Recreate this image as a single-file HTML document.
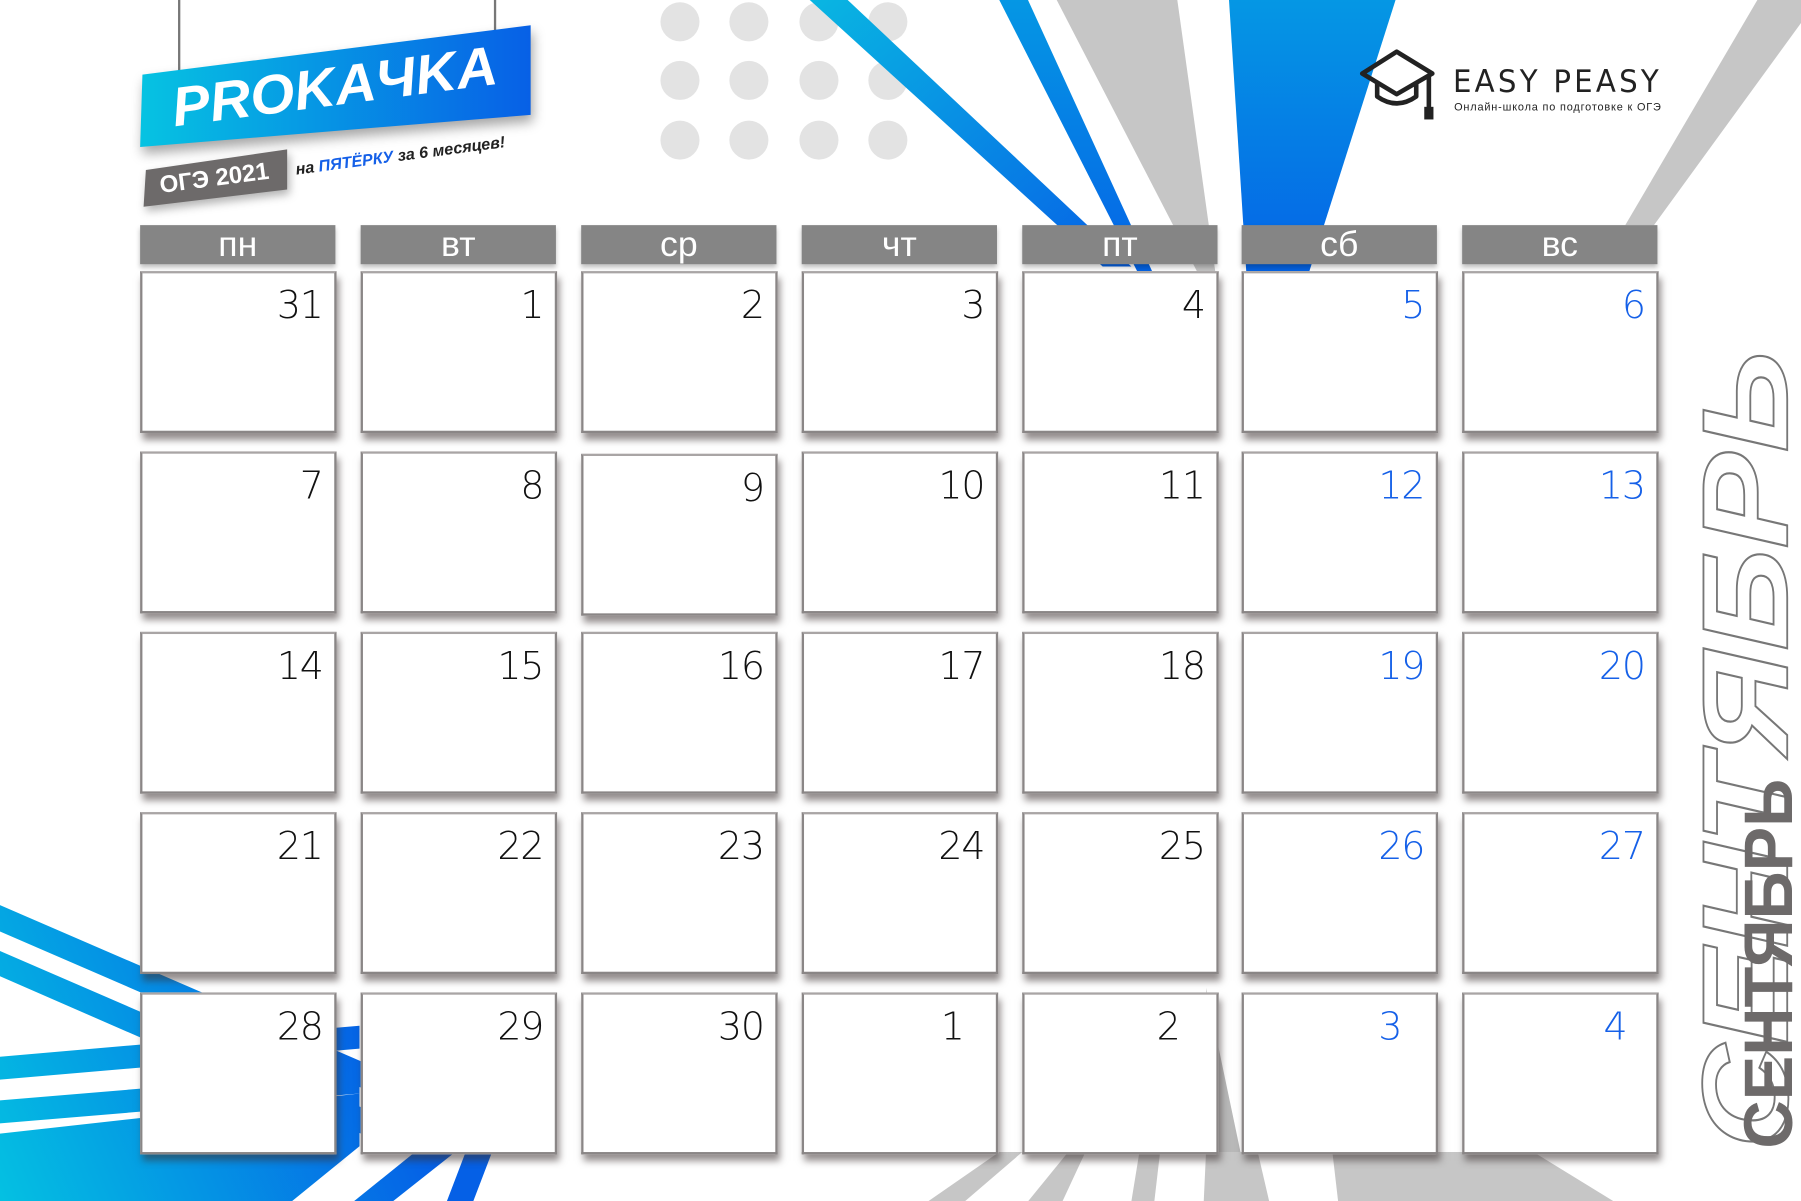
<!DOCTYPE html>
<html><head><meta charset="utf-8"><style>
html,body{margin:0;padding:0;background:#fff;overflow:hidden}
#w{position:absolute;left:0;top:0;width:1568px;height:1046px;transform:scale(1.14860);transform-origin:0 0;font-family:"Liberation Sans","DejaVu Sans",sans-serif}
.h{position:absolute;top:196px;width:170px;height:34px;background:#858585;color:#fff;font-size:31px;text-align:center;line-height:34px;box-shadow:0 3px 4px rgba(0,0,0,.25)}
.c{position:absolute;width:167px;height:137px;background:#fff;border:2px solid #8a8686;border-top-color:#a9a5a5;box-shadow:2px 6px 6px rgba(60,50,50,.55)}
.c span{position:absolute;right:10px;top:8px;font-size:33px;color:#111;font-family:"DejaVu Sans",sans-serif;font-weight:300;letter-spacing:-1px}
.c.b span{color:#1560e8}
</style></head><body><div id="w">
<svg width="1568" height="1046" style="position:absolute;left:0;top:0">
<defs>
<linearGradient id="bl" x1="0" y1="0" x2="1" y2="1"><stop offset="0" stop-color="#09b6e2"/><stop offset="1" stop-color="#0660e6"/></linearGradient>
<linearGradient id="bl2" x1="0" y1="0" x2="0" y2="1"><stop offset="0" stop-color="#0597e4"/><stop offset="1" stop-color="#0564e6"/></linearGradient>
<linearGradient id="pk" x1="0" y1="0" x2="1" y2="0"><stop offset="0" stop-color="#06c3e2"/><stop offset="1" stop-color="#0760e6"/></linearGradient>
<linearGradient id="bb" gradientUnits="userSpaceOnUse" x1="0" y1="1040" x2="330" y2="900"><stop offset="0" stop-color="#04c0e2"/><stop offset="1" stop-color="#0560e6"/></linearGradient>
</defs>
<g fill="#e3e3e3">
<circle cx="592" cy="19" r="17"/><circle cx="652" cy="19" r="17"/><circle cx="713" cy="19" r="17"/><circle cx="773" cy="19" r="17"/>
<circle cx="592" cy="70" r="17"/><circle cx="652" cy="70" r="17"/><circle cx="713" cy="70" r="17"/><circle cx="773" cy="70" r="17"/>
<circle cx="592" cy="122" r="17"/><circle cx="652" cy="122" r="17"/><circle cx="713" cy="122" r="17"/><circle cx="773" cy="122" r="17"/>
</g>
<polygon points="705,0 738,0 985,232 960,232" fill="url(#bl)"/>
<polygon points="870,0 895,0 1003,236 990,236" fill="url(#bl2)"/>
<polygon points="920,0 1025,0 1058,236 1042,236" fill="#c6c6c6"/>
<polygon points="1070,0 1215,0 1140,236 1085,236" fill="url(#bl2)"/>
<polygon points="1530,0 1568,0 1568,20 1440,196 1415,196" fill="#c6c6c6"/>
<!-- bottom left -->
<g fill="url(#bb)">
<polygon points="0,788 319,926 319,949 0,811"/>
<polygon points="0,828 319,966 319,989 0,850"/>
<polygon points="0,920 313,893 313,913 0,940"/>
<polygon points="0,958 313,932 313,952 0,978"/>
<polygon points="0,987 313,952 313,998 254,1046 0,1046"/>
<polygon points="308,1046 360,1004 395,1004 342,1046"/>
<polygon points="389,1046 405,1004 428,1004 412,1046"/>
</g>
<!-- bottom gray -->
<polygon points="808,1046 840,1046 890,1003 870,1003" fill="#c6c6c6"/>
<polygon points="895,1046 925,1046 945,1003 930,1003" fill="#c6c6c6"/>
<polygon points="985,1046 1005,1046 1010,1003 992,1003" fill="#c6c6c6"/>
<polygon points="1048,1046 1105,1046 1095,1003 1050,1003" fill="#c6c6c6"/>
<polygon points="1165,1046 1405,1046 1335,1003 1160,1003" fill="#c6c6c6"/>
<polygon points="1050,860 1080,1003 1060,1003" fill="#b8b8b8"/>
<!-- hanging strings -->
<line x1="156" y1="0" x2="156" y2="63" stroke="#777" stroke-width="2"/>
<line x1="431" y1="0" x2="431" y2="30" stroke="#777" stroke-width="2"/>
<!-- banner -->
<polygon points="124,65 462,22 462,100 122,128" fill="url(#pk)" style="filter:drop-shadow(2px 6px 5px rgba(0,0,0,.35))"/>
<text x="0" y="0" transform="translate(152,110) rotate(-7.5)" font-family="Liberation Sans" font-weight="bold" font-style="italic" font-size="48" fill="#fff" textLength="285" lengthAdjust="spacingAndGlyphs">PROKAЧKA</text>
<polygon points="127,148 250,130 250,165 125,180" fill="#6d6a6a" style="filter:drop-shadow(2px 4px 4px rgba(0,0,0,.3))"/>
<text transform="translate(140,168) rotate(-7.5)" font-family="Liberation Sans" font-weight="bold" font-size="21" fill="#fff">ОГЭ 2021</text>
<text transform="translate(258,152) rotate(-7.5)" font-family="Liberation Sans" font-weight="bold" font-style="italic" font-size="14" fill="#222">на <tspan fill="#1560e8">ПЯТЁРКУ</tspan> за 6 месяцев!</text>
<!-- logo -->
<g fill="none" stroke="#222" stroke-width="4" stroke-linejoin="round">
<polygon points="1186,64 1216,45 1247,64 1216,82"/>
<path d="M1199,72 V84 Q1216,96 1233,84 V72"/>
<path d="M1244,66 V94"/>
</g>
<rect x="1240" y="93" width="8" height="11" fill="#222"/>
<text x="1265" y="80" font-family="DejaVu Sans" font-size="27" fill="#222" letter-spacing="3" textLength="182" lengthAdjust="spacingAndGlyphs">EASY PEASY</text>
<text x="1266" y="96" font-family="Liberation Sans" font-size="9.5" fill="#222" textLength="180">Онлайн-школа по подготовке к ОГЭ</text>
<!-- month -->
<text transform="translate(1556,1000) rotate(-90)" font-family="Liberation Sans" font-weight="bold" font-style="italic" font-size="106" fill="none" stroke="#777" stroke-width="1.6" textLength="695" lengthAdjust="spacingAndGlyphs">СЕНТЯБРЬ</text>
<text transform="translate(1560,1000) rotate(-90)" font-family="Liberation Sans" font-weight="bold" font-size="60" fill="#6d6a6a" textLength="322" lengthAdjust="spacingAndGlyphs">СЕНТЯБРЬ</text>
</svg>
<div class="h" style="left:122px">пн</div><div class="h" style="left:314px">вт</div><div class="h" style="left:506px">ср</div><div class="h" style="left:698px">чт</div><div class="h" style="left:890px">пт</div><div class="h" style="left:1081px">сб</div><div class="h" style="left:1273px">вс</div>

<div class="c" style="left:122px;top:236px"><span>31</span></div><div class="c" style="left:314px;top:236px"><span>1</span></div><div class="c" style="left:506px;top:236px"><span>2</span></div><div class="c" style="left:698px;top:236px"><span>3</span></div><div class="c" style="left:890px;top:236px"><span>4</span></div><div class="c b" style="left:1081px;top:236px"><span>5</span></div><div class="c b" style="left:1273px;top:236px"><span>6</span></div>
<div class="c" style="left:122px;top:393px"><span>7</span></div><div class="c" style="left:314px;top:393px"><span>8</span></div><div class="c" style="left:506px;top:395px"><span>9</span></div><div class="c" style="left:698px;top:393px"><span>10</span></div><div class="c" style="left:890px;top:393px"><span>11</span></div><div class="c b" style="left:1081px;top:393px"><span>12</span></div><div class="c b" style="left:1273px;top:393px"><span>13</span></div>
<div class="c" style="left:122px;top:550px"><span>14</span></div><div class="c" style="left:314px;top:550px"><span>15</span></div><div class="c" style="left:506px;top:550px"><span>16</span></div><div class="c" style="left:698px;top:550px"><span>17</span></div><div class="c" style="left:890px;top:550px"><span>18</span></div><div class="c b" style="left:1081px;top:550px"><span>19</span></div><div class="c b" style="left:1273px;top:550px"><span>20</span></div>
<div class="c" style="left:122px;top:707px"><span>21</span></div><div class="c" style="left:314px;top:707px"><span>22</span></div><div class="c" style="left:506px;top:707px"><span>23</span></div><div class="c" style="left:698px;top:707px"><span>24</span></div><div class="c" style="left:890px;top:707px"><span>25</span></div><div class="c b" style="left:1081px;top:707px"><span>26</span></div><div class="c b" style="left:1273px;top:707px"><span>27</span></div>
<div class="c" style="left:122px;top:864px"><span>28</span></div><div class="c" style="left:314px;top:864px"><span>29</span></div><div class="c" style="left:506px;top:864px"><span>30</span></div><div class="c" style="left:698px;top:864px"><span style="right:28px">1</span></div><div class="c" style="left:890px;top:864px"><span style="right:32px">2</span></div><div class="c b" style="left:1081px;top:864px"><span style="right:30px">3</span></div><div class="c b" style="left:1273px;top:864px"><span style="right:26px">4</span></div>
</div></body></html>
